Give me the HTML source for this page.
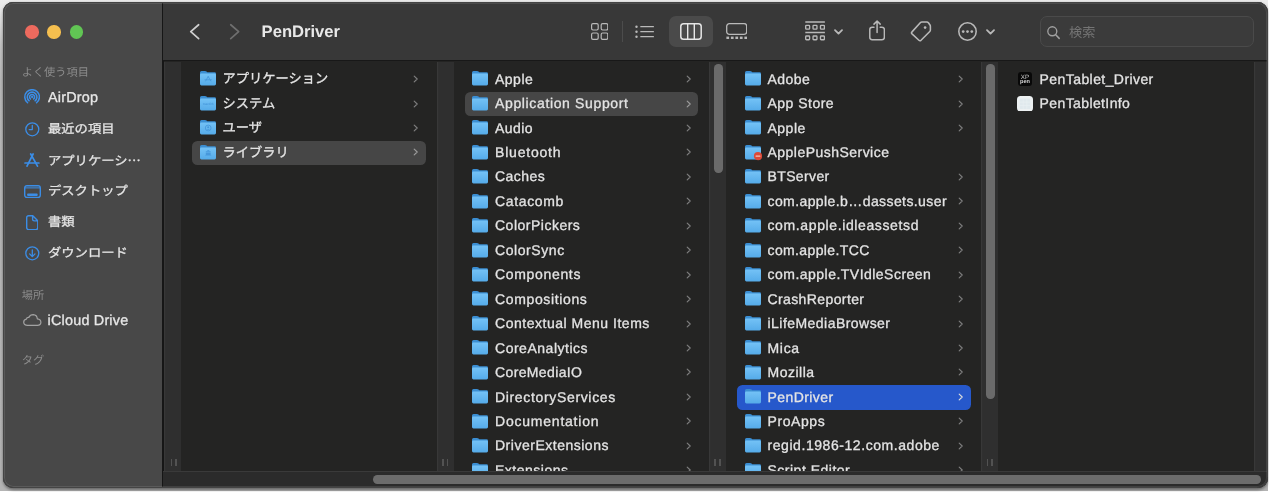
<!DOCTYPE html>
<html lang="ja">
<head>
<meta charset="utf-8">
<title>PenDriver</title>
<style>
html,body{margin:0;padding:0}
body{text-rendering:geometricPrecision;width:1269px;height:492px;overflow:hidden;position:relative;background:#fff;font-family:"Liberation Sans","Noto Sans CJK JP",sans-serif;color:#e2e2e2;-webkit-font-smoothing:antialiased}
.bg{position:absolute;left:0;top:0;width:1269px;height:490.6px;background:linear-gradient(#ececec 0px,#e6e6e6 10px,#c4c4c4 45px,#b8b8b8 80px,#b4b4b4 490px)}
.bgr{position:absolute;left:1268px;top:0;width:1px;height:492px;background:#fff}
.win{will-change:transform;position:absolute;left:3px;top:2px;width:1264.5px;height:485.5px;border-radius:10px;background:#242423;overflow:hidden}
.ring{position:absolute;left:2.8px;top:1.8px;width:1264.9px;height:485.9px;border-radius:10.2px;box-sizing:border-box;border:1.2px solid #444;box-shadow:inset 0 0 0 1px rgba(255,255,255,.1),0 1.5px 3px rgba(0,0,0,.42);pointer-events:none}
.ab,.fo,.t,.sel,.sb,.strip,.hd,.si{position:absolute}
.sidebar{position:absolute;left:0;top:0;width:159px;height:486px;background:#484848}
.sdiv{position:absolute;left:159px;top:0;width:1.6px;height:486px;background:#161616}
.toolbar{position:absolute;left:160px;top:0;width:1106px;height:57.6px;background:#383838}
.tline{position:absolute;left:160px;top:57.6px;width:1106px;height:1.9px;background:#181818}
.strip{top:59.5px;width:17.2px;height:409.1px;background:#2f2f2f;box-shadow:inset 1.2px 0 0 #383838}
.hbar{position:absolute;left:160px;top:468.6px;width:1106px;height:17px;background:#2b2b2b;box-shadow:inset 0 1px 0 #3a3a3a}
.hthumb{position:absolute;left:369.5px;top:473.2px;width:888.6px;height:8.8px;border-radius:4.4px;background:#6c6c6c}
.vthumb{position:absolute;width:8.4px;border-radius:4.2px;background:#6a6a6a}
.hd{width:1.6px;height:7.4px;background:#525252;top:457px}
.t{-webkit-text-stroke:.3px #e4e4e4;font-size:14px;line-height:20px;white-space:nowrap;letter-spacing:.25px;color:#e4e4e4}
.t.j{font-size:13.25px;letter-spacing:0;margin-top:.5px}
.sel{border-radius:5.5px}
.sel.ina{background:#464646}
.sel.act{background:#2658cb}
.sb{-webkit-text-stroke:.3px #e6e6e6;font-size:14.4px;line-height:20px;left:45px;white-space:nowrap;color:#e6e6e6;letter-spacing:.2px}
.sb.j{font-size:13.3px;letter-spacing:0;transform:scaleY(.93);transform-origin:0 82%}
.cj{font-family:"Noto Sans CJK JP",sans-serif}
.sh{position:absolute;left:18.7px;font-size:11.2px;line-height:14px;color:#8c8c8c;white-space:nowrap}
.title{position:absolute;left:258.6px;top:19.6px;font-size:16.6px;line-height:20px;font-weight:bold;color:#e8e8e8;white-space:nowrap}
.tl{position:absolute;top:23.2px;width:13.4px;height:13.4px;border-radius:50%}
.search{position:absolute;left:1036.6px;top:14.4px;width:214px;height:30.4px;box-sizing:border-box;border:1px solid #4a4a4a;border-radius:7px;background:#3b3b3b}
.search span{position:absolute;left:28.4px;top:6px;font-size:13.2px;line-height:20px;color:#747474}
.vsel{position:absolute;left:666px;top:14px;width:44px;height:31px;border-radius:7px;background:#4a4a4a}
.vsep{position:absolute;left:619.2px;top:19px;width:1px;height:21px;background:#4c4c4c}
</style>
</head>
<body>
<div class="bg"></div><div class="bgr"></div>
<div class="win">
<svg width="0" height="0" style="position:absolute"><defs><linearGradient id="fg" x1="0" y1="0" x2="0" y2="1"><stop offset="0" stop-color="#74c2f6"/><stop offset="1" stop-color="#55abe9"/></linearGradient></defs></svg>
<div class="sidebar"></div><div class="sdiv"></div>
<div class="toolbar"></div><div class="tline"></div>
<div class="strip" style="left:160.6px;width:17.3px"></div>
<div class="strip" style="left:433.5px"></div>
<div class="strip" style="left:705.7px"></div>
<div class="strip" style="left:977.9px"></div>
<div class="strip" style="left:1250.6px"></div>
<div class="hd" style="left:167.6px"></div><div class="hd" style="left:172.2px"></div>
<div class="hd" style="left:439.2px"></div><div class="hd" style="left:443.8px"></div>
<div class="hd" style="left:711.4px"></div><div class="hd" style="left:716px"></div>
<div class="hd" style="left:983.6px"></div><div class="hd" style="left:988.2px"></div>
<div class="vthumb" style="left:711.2px;top:62.4px;height:108.4px;width:8.8px"></div>
<div class="vthumb" style="left:983.2px;top:62.4px;height:334.8px;width:8.8px"></div>
<div class="rows" style="position:absolute;left:-3px;top:-2px;width:1269px;height:470.6px;overflow:hidden">
<svg class="fo" style="left:199.7px;top:71.3px" width="17" height="16" viewBox="0 0 17 16"><path d="M0 1.5 Q0 0 1.5 0 H5 Q5.9 0 6.5 .6 L7.3 1.3 H14.6 Q16 1.3 16 2.7 V6 H0 Z" fill="#3b8ed2"/><path d="M0 3.7 Q0 2.5 1.2 2.5 H14.8 Q16 2.5 16 3.7 V13.1 Q16 14.5 14.6 14.5 H1.4 Q0 14.5 0 13.1 Z" fill="url(#fg)"/><path d="M8.2 5.6 L5.6 10 M8.2 5.6 L10.8 10 M5 8.8 H11.4" stroke="#4798db" stroke-width=".9" fill="none" stroke-linecap="round"/></svg><div class="t j" style="left:222.6px;top:68.6px">アプリケーション</div><svg class="ab" style="left:413.2px;top:75.0px" width="6" height="8" viewBox="0 0 6 8"><path d="M1.2 1.1 L4.2 4 L1.2 6.9" fill="none" stroke="#7e7e7e" stroke-width="1.15" stroke-linecap="round" stroke-linejoin="round"/></svg>
<svg class="fo" style="left:199.7px;top:95.8px" width="17" height="16" viewBox="0 0 17 16"><path d="M0 1.5 Q0 0 1.5 0 H5 Q5.9 0 6.5 .6 L7.3 1.3 H14.6 Q16 1.3 16 2.7 V6 H0 Z" fill="#3b8ed2"/><path d="M0 3.7 Q0 2.5 1.2 2.5 H14.8 Q16 2.5 16 3.7 V13.1 Q16 14.5 14.6 14.5 H1.4 Q0 14.5 0 13.1 Z" fill="url(#fg)"/><text x="8.2" y="9.2" font-size="3.2" font-family="Liberation Sans, sans-serif" font-weight="bold" fill="#4798db" text-anchor="middle">macOS</text></svg><div class="t j" style="left:222.6px;top:93.1px">システム</div><svg class="ab" style="left:413.2px;top:99.5px" width="6" height="8" viewBox="0 0 6 8"><path d="M1.2 1.1 L4.2 4 L1.2 6.9" fill="none" stroke="#7e7e7e" stroke-width="1.15" stroke-linecap="round" stroke-linejoin="round"/></svg>
<svg class="fo" style="left:199.7px;top:120.2px" width="17" height="16" viewBox="0 0 17 16"><path d="M0 1.5 Q0 0 1.5 0 H5 Q5.9 0 6.5 .6 L7.3 1.3 H14.6 Q16 1.3 16 2.7 V6 H0 Z" fill="#3b8ed2"/><path d="M0 3.7 Q0 2.5 1.2 2.5 H14.8 Q16 2.5 16 3.7 V13.1 Q16 14.5 14.6 14.5 H1.4 Q0 14.5 0 13.1 Z" fill="url(#fg)"/><circle cx="8.2" cy="8" r="2.9" fill="none" stroke="#4798db" stroke-width=".9"/><circle cx="8.2" cy="7.3" r="1" fill="#4798db"/><path d="M6.4 9.8 Q8.2 8 10 9.8" fill="#4798db"/></svg><div class="t j" style="left:222.6px;top:117.5px">ユーザ</div><svg class="ab" style="left:413.2px;top:123.9px" width="6" height="8" viewBox="0 0 6 8"><path d="M1.2 1.1 L4.2 4 L1.2 6.9" fill="none" stroke="#7e7e7e" stroke-width="1.15" stroke-linecap="round" stroke-linejoin="round"/></svg>
<div class="sel ina" style="left:192.3px;top:140.8px;width:233.4px;height:24.4px"></div><svg class="fo" style="left:199.7px;top:144.7px" width="17" height="16" viewBox="0 0 17 16"><path d="M0 1.5 Q0 0 1.5 0 H5 Q5.9 0 6.5 .6 L7.3 1.3 H14.6 Q16 1.3 16 2.7 V6 H0 Z" fill="#3b8ed2"/><path d="M0 3.7 Q0 2.5 1.2 2.5 H14.8 Q16 2.5 16 3.7 V13.1 Q16 14.5 14.6 14.5 H1.4 Q0 14.5 0 13.1 Z" fill="url(#fg)"/><path d="M5.2 6.8 L8.2 5 L11.2 6.8 Z M5.8 7.4 H10.6 V10 H5.8 Z M5.2 10.4 H11.2 V11 H5.2Z" fill="#4798db"/></svg><div class="t j" style="left:222.6px;top:142.0px">ライブラリ</div><svg class="ab" style="left:413.2px;top:148.4px" width="6" height="8" viewBox="0 0 6 8"><path d="M1.2 1.1 L4.2 4 L1.2 6.9" fill="none" stroke="#9c9c9c" stroke-width="1.15" stroke-linecap="round" stroke-linejoin="round"/></svg>
<svg class="fo" style="left:472.1px;top:71.3px" width="17" height="16" viewBox="0 0 17 16"><path d="M0 1.5 Q0 0 1.5 0 H5 Q5.9 0 6.5 .6 L7.3 1.3 H14.6 Q16 1.3 16 2.7 V6 H0 Z" fill="#3b8ed2"/><path d="M0 3.7 Q0 2.5 1.2 2.5 H14.8 Q16 2.5 16 3.7 V13.1 Q16 14.5 14.6 14.5 H1.4 Q0 14.5 0 13.1 Z" fill="url(#fg)"/></svg><div class="t" style="left:495.0px;top:68.6px;letter-spacing:0.49px">Apple</div><svg class="ab" style="left:685.6px;top:75.0px" width="6" height="8" viewBox="0 0 6 8"><path d="M1.2 1.1 L4.2 4 L1.2 6.9" fill="none" stroke="#7e7e7e" stroke-width="1.15" stroke-linecap="round" stroke-linejoin="round"/></svg>
<div class="sel ina" style="left:464.7px;top:92.0px;width:233.4px;height:24.4px"></div><svg class="fo" style="left:472.1px;top:95.8px" width="17" height="16" viewBox="0 0 17 16"><path d="M0 1.5 Q0 0 1.5 0 H5 Q5.9 0 6.5 .6 L7.3 1.3 H14.6 Q16 1.3 16 2.7 V6 H0 Z" fill="#3b8ed2"/><path d="M0 3.7 Q0 2.5 1.2 2.5 H14.8 Q16 2.5 16 3.7 V13.1 Q16 14.5 14.6 14.5 H1.4 Q0 14.5 0 13.1 Z" fill="url(#fg)"/></svg><div class="t" style="left:495.0px;top:93.1px;letter-spacing:0.64px">Application Support</div><svg class="ab" style="left:685.6px;top:99.5px" width="6" height="8" viewBox="0 0 6 8"><path d="M1.2 1.1 L4.2 4 L1.2 6.9" fill="none" stroke="#9c9c9c" stroke-width="1.15" stroke-linecap="round" stroke-linejoin="round"/></svg>
<svg class="fo" style="left:472.1px;top:120.2px" width="17" height="16" viewBox="0 0 17 16"><path d="M0 1.5 Q0 0 1.5 0 H5 Q5.9 0 6.5 .6 L7.3 1.3 H14.6 Q16 1.3 16 2.7 V6 H0 Z" fill="#3b8ed2"/><path d="M0 3.7 Q0 2.5 1.2 2.5 H14.8 Q16 2.5 16 3.7 V13.1 Q16 14.5 14.6 14.5 H1.4 Q0 14.5 0 13.1 Z" fill="url(#fg)"/></svg><div class="t" style="left:495.0px;top:117.5px;letter-spacing:0.42px">Audio</div><svg class="ab" style="left:685.6px;top:123.9px" width="6" height="8" viewBox="0 0 6 8"><path d="M1.2 1.1 L4.2 4 L1.2 6.9" fill="none" stroke="#7e7e7e" stroke-width="1.15" stroke-linecap="round" stroke-linejoin="round"/></svg>
<svg class="fo" style="left:472.1px;top:144.7px" width="17" height="16" viewBox="0 0 17 16"><path d="M0 1.5 Q0 0 1.5 0 H5 Q5.9 0 6.5 .6 L7.3 1.3 H14.6 Q16 1.3 16 2.7 V6 H0 Z" fill="#3b8ed2"/><path d="M0 3.7 Q0 2.5 1.2 2.5 H14.8 Q16 2.5 16 3.7 V13.1 Q16 14.5 14.6 14.5 H1.4 Q0 14.5 0 13.1 Z" fill="url(#fg)"/></svg><div class="t" style="left:495.0px;top:142.0px;letter-spacing:0.80px">Bluetooth</div><svg class="ab" style="left:685.6px;top:148.4px" width="6" height="8" viewBox="0 0 6 8"><path d="M1.2 1.1 L4.2 4 L1.2 6.9" fill="none" stroke="#7e7e7e" stroke-width="1.15" stroke-linecap="round" stroke-linejoin="round"/></svg>
<svg class="fo" style="left:472.1px;top:169.1px" width="17" height="16" viewBox="0 0 17 16"><path d="M0 1.5 Q0 0 1.5 0 H5 Q5.9 0 6.5 .6 L7.3 1.3 H14.6 Q16 1.3 16 2.7 V6 H0 Z" fill="#3b8ed2"/><path d="M0 3.7 Q0 2.5 1.2 2.5 H14.8 Q16 2.5 16 3.7 V13.1 Q16 14.5 14.6 14.5 H1.4 Q0 14.5 0 13.1 Z" fill="url(#fg)"/></svg><div class="t" style="left:495.0px;top:166.4px;letter-spacing:0.45px">Caches</div><svg class="ab" style="left:685.6px;top:172.8px" width="6" height="8" viewBox="0 0 6 8"><path d="M1.2 1.1 L4.2 4 L1.2 6.9" fill="none" stroke="#7e7e7e" stroke-width="1.15" stroke-linecap="round" stroke-linejoin="round"/></svg>
<svg class="fo" style="left:472.1px;top:193.6px" width="17" height="16" viewBox="0 0 17 16"><path d="M0 1.5 Q0 0 1.5 0 H5 Q5.9 0 6.5 .6 L7.3 1.3 H14.6 Q16 1.3 16 2.7 V6 H0 Z" fill="#3b8ed2"/><path d="M0 3.7 Q0 2.5 1.2 2.5 H14.8 Q16 2.5 16 3.7 V13.1 Q16 14.5 14.6 14.5 H1.4 Q0 14.5 0 13.1 Z" fill="url(#fg)"/></svg><div class="t" style="left:495.0px;top:190.9px;letter-spacing:0.64px">Catacomb</div><svg class="ab" style="left:685.6px;top:197.3px" width="6" height="8" viewBox="0 0 6 8"><path d="M1.2 1.1 L4.2 4 L1.2 6.9" fill="none" stroke="#7e7e7e" stroke-width="1.15" stroke-linecap="round" stroke-linejoin="round"/></svg>
<svg class="fo" style="left:472.1px;top:218.0px" width="17" height="16" viewBox="0 0 17 16"><path d="M0 1.5 Q0 0 1.5 0 H5 Q5.9 0 6.5 .6 L7.3 1.3 H14.6 Q16 1.3 16 2.7 V6 H0 Z" fill="#3b8ed2"/><path d="M0 3.7 Q0 2.5 1.2 2.5 H14.8 Q16 2.5 16 3.7 V13.1 Q16 14.5 14.6 14.5 H1.4 Q0 14.5 0 13.1 Z" fill="url(#fg)"/></svg><div class="t" style="left:495.0px;top:215.3px;letter-spacing:0.50px">ColorPickers</div><svg class="ab" style="left:685.6px;top:221.7px" width="6" height="8" viewBox="0 0 6 8"><path d="M1.2 1.1 L4.2 4 L1.2 6.9" fill="none" stroke="#7e7e7e" stroke-width="1.15" stroke-linecap="round" stroke-linejoin="round"/></svg>
<svg class="fo" style="left:472.1px;top:242.5px" width="17" height="16" viewBox="0 0 17 16"><path d="M0 1.5 Q0 0 1.5 0 H5 Q5.9 0 6.5 .6 L7.3 1.3 H14.6 Q16 1.3 16 2.7 V6 H0 Z" fill="#3b8ed2"/><path d="M0 3.7 Q0 2.5 1.2 2.5 H14.8 Q16 2.5 16 3.7 V13.1 Q16 14.5 14.6 14.5 H1.4 Q0 14.5 0 13.1 Z" fill="url(#fg)"/></svg><div class="t" style="left:495.0px;top:239.8px;letter-spacing:0.58px">ColorSync</div><svg class="ab" style="left:685.6px;top:246.2px" width="6" height="8" viewBox="0 0 6 8"><path d="M1.2 1.1 L4.2 4 L1.2 6.9" fill="none" stroke="#7e7e7e" stroke-width="1.15" stroke-linecap="round" stroke-linejoin="round"/></svg>
<svg class="fo" style="left:472.1px;top:266.9px" width="17" height="16" viewBox="0 0 17 16"><path d="M0 1.5 Q0 0 1.5 0 H5 Q5.9 0 6.5 .6 L7.3 1.3 H14.6 Q16 1.3 16 2.7 V6 H0 Z" fill="#3b8ed2"/><path d="M0 3.7 Q0 2.5 1.2 2.5 H14.8 Q16 2.5 16 3.7 V13.1 Q16 14.5 14.6 14.5 H1.4 Q0 14.5 0 13.1 Z" fill="url(#fg)"/></svg><div class="t" style="left:495.0px;top:264.2px;letter-spacing:0.67px">Components</div><svg class="ab" style="left:685.6px;top:270.6px" width="6" height="8" viewBox="0 0 6 8"><path d="M1.2 1.1 L4.2 4 L1.2 6.9" fill="none" stroke="#7e7e7e" stroke-width="1.15" stroke-linecap="round" stroke-linejoin="round"/></svg>
<svg class="fo" style="left:472.1px;top:291.4px" width="17" height="16" viewBox="0 0 17 16"><path d="M0 1.5 Q0 0 1.5 0 H5 Q5.9 0 6.5 .6 L7.3 1.3 H14.6 Q16 1.3 16 2.7 V6 H0 Z" fill="#3b8ed2"/><path d="M0 3.7 Q0 2.5 1.2 2.5 H14.8 Q16 2.5 16 3.7 V13.1 Q16 14.5 14.6 14.5 H1.4 Q0 14.5 0 13.1 Z" fill="url(#fg)"/></svg><div class="t" style="left:495.0px;top:288.7px;letter-spacing:0.64px">Compositions</div><svg class="ab" style="left:685.6px;top:295.1px" width="6" height="8" viewBox="0 0 6 8"><path d="M1.2 1.1 L4.2 4 L1.2 6.9" fill="none" stroke="#7e7e7e" stroke-width="1.15" stroke-linecap="round" stroke-linejoin="round"/></svg>
<svg class="fo" style="left:472.1px;top:315.8px" width="17" height="16" viewBox="0 0 17 16"><path d="M0 1.5 Q0 0 1.5 0 H5 Q5.9 0 6.5 .6 L7.3 1.3 H14.6 Q16 1.3 16 2.7 V6 H0 Z" fill="#3b8ed2"/><path d="M0 3.7 Q0 2.5 1.2 2.5 H14.8 Q16 2.5 16 3.7 V13.1 Q16 14.5 14.6 14.5 H1.4 Q0 14.5 0 13.1 Z" fill="url(#fg)"/></svg><div class="t" style="left:495.0px;top:313.1px;letter-spacing:0.52px">Contextual Menu Items</div><svg class="ab" style="left:685.6px;top:319.5px" width="6" height="8" viewBox="0 0 6 8"><path d="M1.2 1.1 L4.2 4 L1.2 6.9" fill="none" stroke="#7e7e7e" stroke-width="1.15" stroke-linecap="round" stroke-linejoin="round"/></svg>
<svg class="fo" style="left:472.1px;top:340.3px" width="17" height="16" viewBox="0 0 17 16"><path d="M0 1.5 Q0 0 1.5 0 H5 Q5.9 0 6.5 .6 L7.3 1.3 H14.6 Q16 1.3 16 2.7 V6 H0 Z" fill="#3b8ed2"/><path d="M0 3.7 Q0 2.5 1.2 2.5 H14.8 Q16 2.5 16 3.7 V13.1 Q16 14.5 14.6 14.5 H1.4 Q0 14.5 0 13.1 Z" fill="url(#fg)"/></svg><div class="t" style="left:495.0px;top:337.6px;letter-spacing:0.52px">CoreAnalytics</div><svg class="ab" style="left:685.6px;top:344.0px" width="6" height="8" viewBox="0 0 6 8"><path d="M1.2 1.1 L4.2 4 L1.2 6.9" fill="none" stroke="#7e7e7e" stroke-width="1.15" stroke-linecap="round" stroke-linejoin="round"/></svg>
<svg class="fo" style="left:472.1px;top:364.7px" width="17" height="16" viewBox="0 0 17 16"><path d="M0 1.5 Q0 0 1.5 0 H5 Q5.9 0 6.5 .6 L7.3 1.3 H14.6 Q16 1.3 16 2.7 V6 H0 Z" fill="#3b8ed2"/><path d="M0 3.7 Q0 2.5 1.2 2.5 H14.8 Q16 2.5 16 3.7 V13.1 Q16 14.5 14.6 14.5 H1.4 Q0 14.5 0 13.1 Z" fill="url(#fg)"/></svg><div class="t" style="left:495.0px;top:362.0px;letter-spacing:0.37px">CoreMediaIO</div><svg class="ab" style="left:685.6px;top:368.4px" width="6" height="8" viewBox="0 0 6 8"><path d="M1.2 1.1 L4.2 4 L1.2 6.9" fill="none" stroke="#7e7e7e" stroke-width="1.15" stroke-linecap="round" stroke-linejoin="round"/></svg>
<svg class="fo" style="left:472.1px;top:389.2px" width="17" height="16" viewBox="0 0 17 16"><path d="M0 1.5 Q0 0 1.5 0 H5 Q5.9 0 6.5 .6 L7.3 1.3 H14.6 Q16 1.3 16 2.7 V6 H0 Z" fill="#3b8ed2"/><path d="M0 3.7 Q0 2.5 1.2 2.5 H14.8 Q16 2.5 16 3.7 V13.1 Q16 14.5 14.6 14.5 H1.4 Q0 14.5 0 13.1 Z" fill="url(#fg)"/></svg><div class="t" style="left:495.0px;top:386.5px;letter-spacing:0.66px">DirectoryServices</div><svg class="ab" style="left:685.6px;top:392.9px" width="6" height="8" viewBox="0 0 6 8"><path d="M1.2 1.1 L4.2 4 L1.2 6.9" fill="none" stroke="#7e7e7e" stroke-width="1.15" stroke-linecap="round" stroke-linejoin="round"/></svg>
<svg class="fo" style="left:472.1px;top:413.6px" width="17" height="16" viewBox="0 0 17 16"><path d="M0 1.5 Q0 0 1.5 0 H5 Q5.9 0 6.5 .6 L7.3 1.3 H14.6 Q16 1.3 16 2.7 V6 H0 Z" fill="#3b8ed2"/><path d="M0 3.7 Q0 2.5 1.2 2.5 H14.8 Q16 2.5 16 3.7 V13.1 Q16 14.5 14.6 14.5 H1.4 Q0 14.5 0 13.1 Z" fill="url(#fg)"/></svg><div class="t" style="left:495.0px;top:410.9px;letter-spacing:0.78px">Documentation</div><svg class="ab" style="left:685.6px;top:417.3px" width="6" height="8" viewBox="0 0 6 8"><path d="M1.2 1.1 L4.2 4 L1.2 6.9" fill="none" stroke="#7e7e7e" stroke-width="1.15" stroke-linecap="round" stroke-linejoin="round"/></svg>
<svg class="fo" style="left:472.1px;top:438.1px" width="17" height="16" viewBox="0 0 17 16"><path d="M0 1.5 Q0 0 1.5 0 H5 Q5.9 0 6.5 .6 L7.3 1.3 H14.6 Q16 1.3 16 2.7 V6 H0 Z" fill="#3b8ed2"/><path d="M0 3.7 Q0 2.5 1.2 2.5 H14.8 Q16 2.5 16 3.7 V13.1 Q16 14.5 14.6 14.5 H1.4 Q0 14.5 0 13.1 Z" fill="url(#fg)"/></svg><div class="t" style="left:495.0px;top:435.4px;letter-spacing:0.51px">DriverExtensions</div><svg class="ab" style="left:685.6px;top:441.8px" width="6" height="8" viewBox="0 0 6 8"><path d="M1.2 1.1 L4.2 4 L1.2 6.9" fill="none" stroke="#7e7e7e" stroke-width="1.15" stroke-linecap="round" stroke-linejoin="round"/></svg>
<svg class="fo" style="left:472.1px;top:462.5px" width="17" height="16" viewBox="0 0 17 16"><path d="M0 1.5 Q0 0 1.5 0 H5 Q5.9 0 6.5 .6 L7.3 1.3 H14.6 Q16 1.3 16 2.7 V6 H0 Z" fill="#3b8ed2"/><path d="M0 3.7 Q0 2.5 1.2 2.5 H14.8 Q16 2.5 16 3.7 V13.1 Q16 14.5 14.6 14.5 H1.4 Q0 14.5 0 13.1 Z" fill="url(#fg)"/></svg><div class="t" style="left:495.0px;top:459.8px;letter-spacing:0.50px">Extensions</div><svg class="ab" style="left:685.6px;top:466.2px" width="6" height="8" viewBox="0 0 6 8"><path d="M1.2 1.1 L4.2 4 L1.2 6.9" fill="none" stroke="#7e7e7e" stroke-width="1.15" stroke-linecap="round" stroke-linejoin="round"/></svg>
<svg class="fo" style="left:744.6px;top:71.3px" width="17" height="16" viewBox="0 0 17 16"><path d="M0 1.5 Q0 0 1.5 0 H5 Q5.9 0 6.5 .6 L7.3 1.3 H14.6 Q16 1.3 16 2.7 V6 H0 Z" fill="#3b8ed2"/><path d="M0 3.7 Q0 2.5 1.2 2.5 H14.8 Q16 2.5 16 3.7 V13.1 Q16 14.5 14.6 14.5 H1.4 Q0 14.5 0 13.1 Z" fill="url(#fg)"/></svg><div class="t" style="left:767.5px;top:68.6px;letter-spacing:0.43px">Adobe</div><svg class="ab" style="left:958.1px;top:75.0px" width="6" height="8" viewBox="0 0 6 8"><path d="M1.2 1.1 L4.2 4 L1.2 6.9" fill="none" stroke="#7e7e7e" stroke-width="1.15" stroke-linecap="round" stroke-linejoin="round"/></svg>
<svg class="fo" style="left:744.6px;top:95.8px" width="17" height="16" viewBox="0 0 17 16"><path d="M0 1.5 Q0 0 1.5 0 H5 Q5.9 0 6.5 .6 L7.3 1.3 H14.6 Q16 1.3 16 2.7 V6 H0 Z" fill="#3b8ed2"/><path d="M0 3.7 Q0 2.5 1.2 2.5 H14.8 Q16 2.5 16 3.7 V13.1 Q16 14.5 14.6 14.5 H1.4 Q0 14.5 0 13.1 Z" fill="url(#fg)"/></svg><div class="t" style="left:767.5px;top:93.1px;letter-spacing:0.48px">App Store</div><svg class="ab" style="left:958.1px;top:99.5px" width="6" height="8" viewBox="0 0 6 8"><path d="M1.2 1.1 L4.2 4 L1.2 6.9" fill="none" stroke="#7e7e7e" stroke-width="1.15" stroke-linecap="round" stroke-linejoin="round"/></svg>
<svg class="fo" style="left:744.6px;top:120.2px" width="17" height="16" viewBox="0 0 17 16"><path d="M0 1.5 Q0 0 1.5 0 H5 Q5.9 0 6.5 .6 L7.3 1.3 H14.6 Q16 1.3 16 2.7 V6 H0 Z" fill="#3b8ed2"/><path d="M0 3.7 Q0 2.5 1.2 2.5 H14.8 Q16 2.5 16 3.7 V13.1 Q16 14.5 14.6 14.5 H1.4 Q0 14.5 0 13.1 Z" fill="url(#fg)"/></svg><div class="t" style="left:767.5px;top:117.5px;letter-spacing:0.49px">Apple</div><svg class="ab" style="left:958.1px;top:123.9px" width="6" height="8" viewBox="0 0 6 8"><path d="M1.2 1.1 L4.2 4 L1.2 6.9" fill="none" stroke="#7e7e7e" stroke-width="1.15" stroke-linecap="round" stroke-linejoin="round"/></svg>
<svg class="fo" style="left:744.6px;top:144.7px" width="17" height="16" viewBox="0 0 17 16"><path d="M0 1.5 Q0 0 1.5 0 H5 Q5.9 0 6.5 .6 L7.3 1.3 H14.6 Q16 1.3 16 2.7 V6 H0 Z" fill="#3b8ed2"/><path d="M0 3.7 Q0 2.5 1.2 2.5 H14.8 Q16 2.5 16 3.7 V13.1 Q16 14.5 14.6 14.5 H1.4 Q0 14.5 0 13.1 Z" fill="url(#fg)"/><circle cx="13" cy="11.1" r="4.1" fill="#dc4a38"/><rect x="10.6" y="10.4" width="4.8" height="1.4" rx=".4" fill="#f3c3bc"/></svg><div class="t" style="left:767.5px;top:142.0px;letter-spacing:0.47px">ApplePushService</div>
<svg class="fo" style="left:744.6px;top:169.1px" width="17" height="16" viewBox="0 0 17 16"><path d="M0 1.5 Q0 0 1.5 0 H5 Q5.9 0 6.5 .6 L7.3 1.3 H14.6 Q16 1.3 16 2.7 V6 H0 Z" fill="#3b8ed2"/><path d="M0 3.7 Q0 2.5 1.2 2.5 H14.8 Q16 2.5 16 3.7 V13.1 Q16 14.5 14.6 14.5 H1.4 Q0 14.5 0 13.1 Z" fill="url(#fg)"/></svg><div class="t" style="left:767.5px;top:166.4px;letter-spacing:0.38px">BTServer</div><svg class="ab" style="left:958.1px;top:172.8px" width="6" height="8" viewBox="0 0 6 8"><path d="M1.2 1.1 L4.2 4 L1.2 6.9" fill="none" stroke="#7e7e7e" stroke-width="1.15" stroke-linecap="round" stroke-linejoin="round"/></svg>
<svg class="fo" style="left:744.6px;top:193.6px" width="17" height="16" viewBox="0 0 17 16"><path d="M0 1.5 Q0 0 1.5 0 H5 Q5.9 0 6.5 .6 L7.3 1.3 H14.6 Q16 1.3 16 2.7 V6 H0 Z" fill="#3b8ed2"/><path d="M0 3.7 Q0 2.5 1.2 2.5 H14.8 Q16 2.5 16 3.7 V13.1 Q16 14.5 14.6 14.5 H1.4 Q0 14.5 0 13.1 Z" fill="url(#fg)"/></svg><div class="t" style="left:767.5px;top:190.9px;letter-spacing:0.41px">com.apple.b…dassets.user</div><svg class="ab" style="left:958.1px;top:197.3px" width="6" height="8" viewBox="0 0 6 8"><path d="M1.2 1.1 L4.2 4 L1.2 6.9" fill="none" stroke="#7e7e7e" stroke-width="1.15" stroke-linecap="round" stroke-linejoin="round"/></svg>
<svg class="fo" style="left:744.6px;top:218.0px" width="17" height="16" viewBox="0 0 17 16"><path d="M0 1.5 Q0 0 1.5 0 H5 Q5.9 0 6.5 .6 L7.3 1.3 H14.6 Q16 1.3 16 2.7 V6 H0 Z" fill="#3b8ed2"/><path d="M0 3.7 Q0 2.5 1.2 2.5 H14.8 Q16 2.5 16 3.7 V13.1 Q16 14.5 14.6 14.5 H1.4 Q0 14.5 0 13.1 Z" fill="url(#fg)"/></svg><div class="t" style="left:767.5px;top:215.3px;letter-spacing:0.62px">com.apple.idleassetsd</div><svg class="ab" style="left:958.1px;top:221.7px" width="6" height="8" viewBox="0 0 6 8"><path d="M1.2 1.1 L4.2 4 L1.2 6.9" fill="none" stroke="#7e7e7e" stroke-width="1.15" stroke-linecap="round" stroke-linejoin="round"/></svg>
<svg class="fo" style="left:744.6px;top:242.5px" width="17" height="16" viewBox="0 0 17 16"><path d="M0 1.5 Q0 0 1.5 0 H5 Q5.9 0 6.5 .6 L7.3 1.3 H14.6 Q16 1.3 16 2.7 V6 H0 Z" fill="#3b8ed2"/><path d="M0 3.7 Q0 2.5 1.2 2.5 H14.8 Q16 2.5 16 3.7 V13.1 Q16 14.5 14.6 14.5 H1.4 Q0 14.5 0 13.1 Z" fill="url(#fg)"/></svg><div class="t" style="left:767.5px;top:239.8px;letter-spacing:0.38px">com.apple.TCC</div><svg class="ab" style="left:958.1px;top:246.2px" width="6" height="8" viewBox="0 0 6 8"><path d="M1.2 1.1 L4.2 4 L1.2 6.9" fill="none" stroke="#7e7e7e" stroke-width="1.15" stroke-linecap="round" stroke-linejoin="round"/></svg>
<svg class="fo" style="left:744.6px;top:266.9px" width="17" height="16" viewBox="0 0 17 16"><path d="M0 1.5 Q0 0 1.5 0 H5 Q5.9 0 6.5 .6 L7.3 1.3 H14.6 Q16 1.3 16 2.7 V6 H0 Z" fill="#3b8ed2"/><path d="M0 3.7 Q0 2.5 1.2 2.5 H14.8 Q16 2.5 16 3.7 V13.1 Q16 14.5 14.6 14.5 H1.4 Q0 14.5 0 13.1 Z" fill="url(#fg)"/></svg><div class="t" style="left:767.5px;top:264.2px;letter-spacing:0.48px">com.apple.TVIdleScreen</div><svg class="ab" style="left:958.1px;top:270.6px" width="6" height="8" viewBox="0 0 6 8"><path d="M1.2 1.1 L4.2 4 L1.2 6.9" fill="none" stroke="#7e7e7e" stroke-width="1.15" stroke-linecap="round" stroke-linejoin="round"/></svg>
<svg class="fo" style="left:744.6px;top:291.4px" width="17" height="16" viewBox="0 0 17 16"><path d="M0 1.5 Q0 0 1.5 0 H5 Q5.9 0 6.5 .6 L7.3 1.3 H14.6 Q16 1.3 16 2.7 V6 H0 Z" fill="#3b8ed2"/><path d="M0 3.7 Q0 2.5 1.2 2.5 H14.8 Q16 2.5 16 3.7 V13.1 Q16 14.5 14.6 14.5 H1.4 Q0 14.5 0 13.1 Z" fill="url(#fg)"/></svg><div class="t" style="left:767.5px;top:288.7px;letter-spacing:0.39px">CrashReporter</div><svg class="ab" style="left:958.1px;top:295.1px" width="6" height="8" viewBox="0 0 6 8"><path d="M1.2 1.1 L4.2 4 L1.2 6.9" fill="none" stroke="#7e7e7e" stroke-width="1.15" stroke-linecap="round" stroke-linejoin="round"/></svg>
<svg class="fo" style="left:744.6px;top:315.8px" width="17" height="16" viewBox="0 0 17 16"><path d="M0 1.5 Q0 0 1.5 0 H5 Q5.9 0 6.5 .6 L7.3 1.3 H14.6 Q16 1.3 16 2.7 V6 H0 Z" fill="#3b8ed2"/><path d="M0 3.7 Q0 2.5 1.2 2.5 H14.8 Q16 2.5 16 3.7 V13.1 Q16 14.5 14.6 14.5 H1.4 Q0 14.5 0 13.1 Z" fill="url(#fg)"/></svg><div class="t" style="left:767.5px;top:313.1px;letter-spacing:0.46px">iLifeMediaBrowser</div><svg class="ab" style="left:958.1px;top:319.5px" width="6" height="8" viewBox="0 0 6 8"><path d="M1.2 1.1 L4.2 4 L1.2 6.9" fill="none" stroke="#7e7e7e" stroke-width="1.15" stroke-linecap="round" stroke-linejoin="round"/></svg>
<svg class="fo" style="left:744.6px;top:340.3px" width="17" height="16" viewBox="0 0 17 16"><path d="M0 1.5 Q0 0 1.5 0 H5 Q5.9 0 6.5 .6 L7.3 1.3 H14.6 Q16 1.3 16 2.7 V6 H0 Z" fill="#3b8ed2"/><path d="M0 3.7 Q0 2.5 1.2 2.5 H14.8 Q16 2.5 16 3.7 V13.1 Q16 14.5 14.6 14.5 H1.4 Q0 14.5 0 13.1 Z" fill="url(#fg)"/></svg><div class="t" style="left:767.5px;top:337.6px;letter-spacing:0.68px">Mica</div><svg class="ab" style="left:958.1px;top:344.0px" width="6" height="8" viewBox="0 0 6 8"><path d="M1.2 1.1 L4.2 4 L1.2 6.9" fill="none" stroke="#7e7e7e" stroke-width="1.15" stroke-linecap="round" stroke-linejoin="round"/></svg>
<svg class="fo" style="left:744.6px;top:364.7px" width="17" height="16" viewBox="0 0 17 16"><path d="M0 1.5 Q0 0 1.5 0 H5 Q5.9 0 6.5 .6 L7.3 1.3 H14.6 Q16 1.3 16 2.7 V6 H0 Z" fill="#3b8ed2"/><path d="M0 3.7 Q0 2.5 1.2 2.5 H14.8 Q16 2.5 16 3.7 V13.1 Q16 14.5 14.6 14.5 H1.4 Q0 14.5 0 13.1 Z" fill="url(#fg)"/></svg><div class="t" style="left:767.5px;top:362.0px;letter-spacing:0.50px">Mozilla</div><svg class="ab" style="left:958.1px;top:368.4px" width="6" height="8" viewBox="0 0 6 8"><path d="M1.2 1.1 L4.2 4 L1.2 6.9" fill="none" stroke="#7e7e7e" stroke-width="1.15" stroke-linecap="round" stroke-linejoin="round"/></svg>
<div class="sel act" style="left:737.2px;top:385.3px;width:233.4px;height:24.4px"></div><svg class="fo" style="left:744.6px;top:389.2px" width="17" height="16" viewBox="0 0 17 16"><path d="M0 1.5 Q0 0 1.5 0 H5 Q5.9 0 6.5 .6 L7.3 1.3 H14.6 Q16 1.3 16 2.7 V6 H0 Z" fill="#3b8ed2"/><path d="M0 3.7 Q0 2.5 1.2 2.5 H14.8 Q16 2.5 16 3.7 V13.1 Q16 14.5 14.6 14.5 H1.4 Q0 14.5 0 13.1 Z" fill="url(#fg)"/></svg><div class="t" style="left:767.5px;top:386.5px;letter-spacing:0.43px">PenDriver</div><svg class="ab" style="left:958.1px;top:392.9px" width="6" height="8" viewBox="0 0 6 8"><path d="M1.2 1.1 L4.2 4 L1.2 6.9" fill="none" stroke="#dcdcdc" stroke-width="1.15" stroke-linecap="round" stroke-linejoin="round"/></svg>
<svg class="fo" style="left:744.6px;top:413.6px" width="17" height="16" viewBox="0 0 17 16"><path d="M0 1.5 Q0 0 1.5 0 H5 Q5.9 0 6.5 .6 L7.3 1.3 H14.6 Q16 1.3 16 2.7 V6 H0 Z" fill="#3b8ed2"/><path d="M0 3.7 Q0 2.5 1.2 2.5 H14.8 Q16 2.5 16 3.7 V13.1 Q16 14.5 14.6 14.5 H1.4 Q0 14.5 0 13.1 Z" fill="url(#fg)"/></svg><div class="t" style="left:767.5px;top:410.9px;letter-spacing:0.58px">ProApps</div><svg class="ab" style="left:958.1px;top:417.3px" width="6" height="8" viewBox="0 0 6 8"><path d="M1.2 1.1 L4.2 4 L1.2 6.9" fill="none" stroke="#7e7e7e" stroke-width="1.15" stroke-linecap="round" stroke-linejoin="round"/></svg>
<svg class="fo" style="left:744.6px;top:438.1px" width="17" height="16" viewBox="0 0 17 16"><path d="M0 1.5 Q0 0 1.5 0 H5 Q5.9 0 6.5 .6 L7.3 1.3 H14.6 Q16 1.3 16 2.7 V6 H0 Z" fill="#3b8ed2"/><path d="M0 3.7 Q0 2.5 1.2 2.5 H14.8 Q16 2.5 16 3.7 V13.1 Q16 14.5 14.6 14.5 H1.4 Q0 14.5 0 13.1 Z" fill="url(#fg)"/></svg><div class="t" style="left:767.5px;top:435.4px;letter-spacing:0.56px">regid.1986-12.com.adobe</div><svg class="ab" style="left:958.1px;top:441.8px" width="6" height="8" viewBox="0 0 6 8"><path d="M1.2 1.1 L4.2 4 L1.2 6.9" fill="none" stroke="#7e7e7e" stroke-width="1.15" stroke-linecap="round" stroke-linejoin="round"/></svg>
<svg class="fo" style="left:744.6px;top:462.5px" width="17" height="16" viewBox="0 0 17 16"><path d="M0 1.5 Q0 0 1.5 0 H5 Q5.9 0 6.5 .6 L7.3 1.3 H14.6 Q16 1.3 16 2.7 V6 H0 Z" fill="#3b8ed2"/><path d="M0 3.7 Q0 2.5 1.2 2.5 H14.8 Q16 2.5 16 3.7 V13.1 Q16 14.5 14.6 14.5 H1.4 Q0 14.5 0 13.1 Z" fill="url(#fg)"/></svg><div class="t" style="left:767.5px;top:459.8px;letter-spacing:0.50px">Script Editor</div><svg class="ab" style="left:958.1px;top:466.2px" width="6" height="8" viewBox="0 0 6 8"><path d="M1.2 1.1 L4.2 4 L1.2 6.9" fill="none" stroke="#7e7e7e" stroke-width="1.15" stroke-linecap="round" stroke-linejoin="round"/></svg>
<!-- column 4 -->
<svg class="ab" style="left:1018.1px;top:71.9px" width="14" height="14" viewBox="0 0 14 14"><rect width="14" height="14" rx="3" fill="#080808"/><text x="7" y="6.6" font-size="6.2" font-family="Liberation Sans, sans-serif" fill="#d0d0d0" text-anchor="middle">XP</text><text x="7" y="11.4" font-size="5.6" font-family="Liberation Sans, sans-serif" font-weight="bold" fill="#d8d8d8" text-anchor="middle">pen</text></svg>
<div class="t" style="left:1039.6px;top:68.6px;letter-spacing:0.42px">PenTablet_Driver</div>
<svg class="ab" style="left:1017.1px;top:95.5px" width="16" height="15.6" viewBox="0 0 16 15.6"><rect width="16" height="15.6" rx="3.6" fill="#edf1f2"/><rect x="2.8" y="2.6" width="10.4" height="10.4" fill="#e0e9ed"/><path d="M6.2 2.6V13M9.8 2.6V13M2.8 6.1H13.2M2.8 9.5H13.2" stroke="#eaf0f3" stroke-width=".6"/></svg>
<div class="t" style="left:1039.6px;top:93.1px;letter-spacing:0.39px">PenTabletInfo</div>
</div>
<div class="hbar"></div><div class="hthumb"></div>

<!-- traffic lights -->
<div class="tl" style="left:22.2px;background:#ed6a5e"></div>
<div class="tl" style="left:44.4px;background:#f5bf4f"></div>
<div class="tl" style="left:66.6px;background:#61c554"></div>

<!-- sidebar -->
<div class="sh" style="top:64px">よく使う項目</div>
<div class="sb" style="top:86px">AirDrop</div>
<div class="sb j" style="top:117px">最近の項目</div>
<div class="sb j" style="top:148px">アプリケーシ<span class="cj">…</span></div>
<div class="sb j" style="top:179px">デスクトップ</div>
<div class="sb j" style="top:210px">書類</div>
<div class="sb j" style="top:241px">ダウンロード</div>
<div class="sh" style="top:286.8px">場所</div>
<div class="sb" style="top:308.7px;left:44.6px">iCloud Drive</div>
<div class="sh" style="top:351.8px">タグ</div>
<svg class="ab" style="left:21px;top:87.4px" width="16.4" height="15.4" viewBox="0 0 16.4 15.4"><g fill="none" stroke="#3b8de6" stroke-width="1.55" stroke-linecap="round"><path d="M3.6 13.75 A7.3 7.3 0 1 1 12.6 13.75"/><path d="M5.1 11.8 A4.85 4.85 0 1 1 11.1 11.8"/><path d="M6.5 9.9 A2.5 2.5 0 1 1 9.7 9.9"/></g><circle cx="8.1" cy="8" r="1.15" fill="#3b8de6"/></svg>
<svg class="ab" style="left:22px;top:120.4px" width="14.6" height="14.6" viewBox="0 0 14.6 14.6"><circle cx="7.3" cy="7.3" r="6.5" fill="none" stroke="#3b8de6" stroke-width="1.3"/><path d="M7.3 3.4 V7.6 H4.2" fill="none" stroke="#3b8de6" stroke-width="1.3" stroke-linecap="round" stroke-linejoin="round"/></svg>
<svg class="ab" style="left:21px;top:150.6px" width="16" height="14.4" viewBox="0 0 16 14.4"><g fill="none" stroke="#3b8de6" stroke-width="1.7" stroke-linecap="round"><path d="M9.1 1 L3 13.1"/><path d="M6.7 1 L13.5 13.2"/><path d="M1 10 H14.9"/></g></svg>
<svg class="ab" style="left:20.7px;top:182.9px" width="17" height="13.2" viewBox="0 0 17 13.2"><rect x=".7" y=".7" width="15.6" height="11.8" rx="2.2" fill="none" stroke="#3b8de6" stroke-width="1.4"/><path d="M.8 2.9 H16.2" stroke="#3b8de6" stroke-width="1"/><rect x="3.2" y="8.6" width="10.4" height="2.3" rx=".6" fill="#3b8de6"/></svg>
<svg class="ab" style="left:22.8px;top:212.6px" width="12.6" height="15.4" viewBox="0 0 12.6 15.4"><path d="M2.7 .7 H6.8 L11.8 5.7 V12.6 Q11.8 14.6 9.8 14.6 H2.7 Q.7 14.6 .7 12.6 V2.7 Q.7 .7 2.7 .7 Z M6.6 .9 V4.2 Q6.6 5.9 8.3 5.9 H11.6" fill="none" stroke="#3b8de6" stroke-width="1.4" stroke-linejoin="round"/></svg>
<svg class="ab" style="left:22px;top:244px" width="14.6" height="14.6" viewBox="0 0 14.6 14.6"><circle cx="7.3" cy="7.3" r="6.5" fill="none" stroke="#3b8de6" stroke-width="1.3"/><path d="M7.3 3.8 V10.4 M4.6 7.9 L7.3 10.6 L10 7.9" fill="none" stroke="#3b8de6" stroke-width="1.3" stroke-linecap="round" stroke-linejoin="round"/></svg>
<svg class="ab" style="left:20px;top:312.2px" width="18.6" height="12" viewBox="0 0 18.6 12"><path d="M4.6 11.3 Q.7 11.3 .7 8.2 Q.7 5.6 3.4 5.2 Q3.8 3.2 5.8 3.4 Q7.2 .7 10.2 .7 Q14 .9 14.3 4.8 Q17.9 5.2 17.9 8.2 Q17.9 11.3 14.4 11.3 Z" fill="none" stroke="#a2a2a2" stroke-width="1.2" stroke-linejoin="round"/></svg>
<!-- toolbar -->
<div class="title">PenDriver</div>
<div class="vsel"></div><div class="vsep"></div>
<div class="search"><span>検索</span></div>
<svg class="ab" style="left:185.6px;top:20.6px" width="11.4" height="17.4" viewBox="0 0 11.4 17.4"><path d="M9.65 1.75 L1.75 8.7 L9.65 15.65" fill="none" stroke="#cfcfcf" stroke-width="1.7" stroke-linecap="round" stroke-linejoin="round"/></svg>
<svg class="ab" style="left:226.2px;top:20.6px" width="11.4" height="17.4" viewBox="0 0 11.4 17.4"><path d="M1.75 1.75 L9.65 8.7 L1.75 15.65" fill="none" stroke="#6f6f6f" stroke-width="1.7" stroke-linecap="round" stroke-linejoin="round"/></svg>
<svg class="ab" style="left:588px;top:20.6px" width="17.4" height="17" viewBox="0 0 17.4 17"><g fill="none" stroke="#b9b9b9" stroke-width="1.2"><rect x=".6" y=".6" width="6.6" height="6.4" rx="1.4"/><rect x="10.2" y=".6" width="6.6" height="6.4" rx="1.4"/><rect x=".6" y="10" width="6.6" height="6.4" rx="1.4"/><rect x="10.2" y="10" width="6.6" height="6.4" rx="1.4"/></g></svg>
<svg class="ab" style="left:632.4px;top:22.6px" width="19.2" height="14" viewBox="0 0 19.2 14"><g fill="#b9b9b9"><circle cx="1.5" cy="1.7" r="1.2"/><circle cx="1.5" cy="6.7" r="1.2"/><circle cx="1.5" cy="11.7" r="1.2"/></g><g stroke="#b9b9b9" stroke-width="1.25" stroke-linecap="round"><path d="M5.8 1.7 H18.4"/><path d="M5.8 6.7 H18.4"/><path d="M5.8 11.7 H18.4"/></g></svg>
<svg class="ab" style="left:677px;top:20.6px" width="22" height="17" viewBox="0 0 22 17"><rect x=".8" y=".8" width="20.4" height="15.4" rx="2.8" fill="none" stroke="#e6e6e6" stroke-width="1.5"/><path d="M7.7 1 V16 M14.3 1 V16" stroke="#e6e6e6" stroke-width="1.4"/></svg>
<svg class="ab" style="left:722.8px;top:20.6px" width="21.4" height="16.6" viewBox="0 0 21.4 16.6"><rect x=".7" y=".7" width="20" height="10.6" rx="2.6" fill="none" stroke="#b9b9b9" stroke-width="1.3"/><g fill="#b9b9b9"><rect x=".4" y="13.6" width="2.7" height="2.9"/><rect x="4.9" y="13.6" width="2.7" height="2.9"/><rect x="9.4" y="13.6" width="2.7" height="2.9"/><rect x="13.9" y="13.6" width="2.7" height="2.9"/><rect x="18.4" y="13.6" width="2.7" height="2.9"/></g></svg>
<svg class="ab" style="left:802.3px;top:18.9px" width="20.2" height="20.4" viewBox="0 0 20.2 20.4"><g stroke="#b9b9b9" stroke-width="1.35" fill="none"><path d="M.3 .9 H19.9 M.3 11.5 H19.9" stroke-width="1.55"/><rect x="0.7" y="4.4" width="3.9" height="3.8" rx=".7" /><rect x="8.05" y="4.4" width="3.9" height="3.8" rx=".7" /><rect x="15.5" y="4.4" width="3.9" height="3.8" rx=".7" /><rect x="0.7" y="15" width="3.9" height="3.8" rx=".7" /><rect x="8.05" y="15" width="3.9" height="3.8" rx=".7" /><rect x="15.5" y="15" width="3.9" height="3.8" rx=".7" /></g></svg>
<svg class="ab" style="left:831.2px;top:27.2px" width="9" height="6" viewBox="0 0 9 6"><path d="M1 1.1 L4.5 4.6 L8 1.1" fill="none" stroke="#b9b9b9" stroke-width="1.8" stroke-linecap="round" stroke-linejoin="round"/></svg>
<svg class="ab" style="left:865.9px;top:18.4px" width="16.2" height="20.6" viewBox="0 0 16.2 20.6"><g fill="none" stroke="#b9b9b9" stroke-width="1.5" stroke-linecap="round" stroke-linejoin="round"><path d="M5 7.2 H3.2 Q.8 7.2 .8 9.6 V17.3 Q.8 19.7 3.2 19.7 H13 Q15.4 19.7 15.4 17.3 V9.6 Q15.4 7.2 13 7.2 H11.2"/><path d="M8.1 12.6 V1.4 M5 4.1 L8.1 1 L11.2 4.1"/></g></svg>
<svg class="ab" style="left:906.5px;top:19.3px" width="22" height="21.4" viewBox="0 0 22 21.4"><path d="M11.9 .95 H16.9 Q17.8 .95 18.4 1.7 L20 4 Q20.4 4.6 20.4 5.4 V9 Q20.4 9.9 19.8 10.5 L11 19.3 Q9.9 20.2 8.9 19.3 L2 12.9 Q1 11.9 2 10.9 L10.5 1.6 Q11.1 .95 11.9 .95 Z" fill="none" stroke="#b9b9b9" stroke-width="1.55" stroke-linejoin="round"/><circle cx="15.1" cy="6.6" r="1.3" fill="#b9b9b9"/></svg>
<svg class="ab" style="left:955.2px;top:20.1px" width="19" height="19" viewBox="0 0 19 19"><circle cx="9.5" cy="9.5" r="8.7" fill="none" stroke="#b9b9b9" stroke-width="1.55"/><g fill="#b9b9b9"><circle cx="5.2" cy="9.6" r="1.35"/><circle cx="9.5" cy="9.6" r="1.35"/><circle cx="13.8" cy="9.6" r="1.35"/></g></svg>
<svg class="ab" style="left:982.6px;top:27.2px" width="9" height="6" viewBox="0 0 9 6"><path d="M1 1.1 L4.5 4.6 L8 1.1" fill="none" stroke="#b9b9b9" stroke-width="1.8" stroke-linecap="round" stroke-linejoin="round"/></svg>
<svg class="ab" style="left:1044.4px;top:24.2px" width="14" height="14.4" viewBox="0 0 14 14.4"><circle cx="5.3" cy="5.3" r="4.5" fill="none" stroke="#a0a0a0" stroke-width="1.35"/><path d="M8.7 8.8 L12.2 12.4" stroke="#a0a0a0" stroke-width="1.5" stroke-linecap="round"/></svg>
</div>
<div class="ring"></div>
</body>
</html>
